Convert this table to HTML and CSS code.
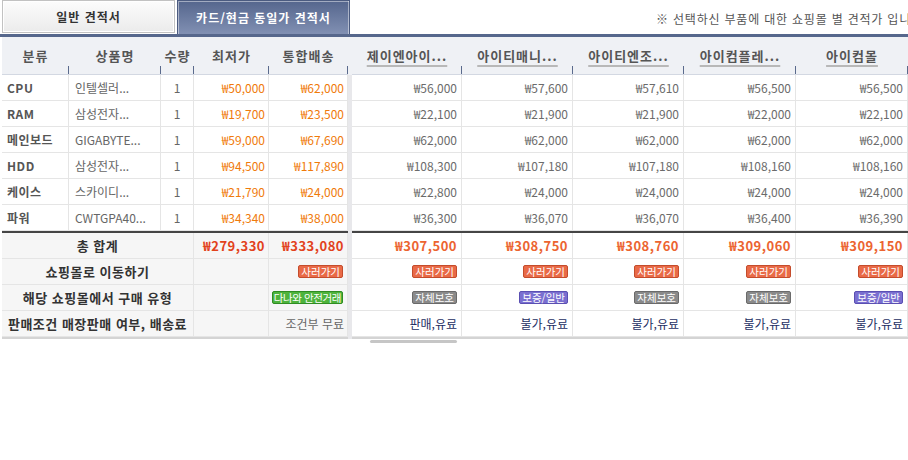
FILE: index.html
```html
<!DOCTYPE html>
<html lang="ko">
<head>
<meta charset="utf-8">
<title>견적서</title>
<link rel="stylesheet" href="styles.css">
</head>
<body>
<div class="top">
  <div class="tab tab-off">일반 견적서</div>
  <div class="tab tab-on">카드/현금 동일가 견적서</div>
  <div class="note">※ 선택하신 부품에 대한 쇼핑몰 별 견적가 입니다.</div>
</div>
<div class="bar"></div>
<div class="board">
  <div class="grid left">
    <div class="h">분류</div><div class="h">상품명</div><div class="h">수량</div><div class="h">최저가</div><div class="h">통합배송</div>

    <div class="c cat">CPU</div><div class="c name">인텔셀러...</div><div class="c m">1</div><div class="c r low">₩50,000</div><div class="c r low">₩62,000</div>
    <div class="c cat">RAM</div><div class="c name">삼성전자...</div><div class="c m">1</div><div class="c r low">₩19,700</div><div class="c r low">₩23,500</div>
    <div class="c cat">메인보드</div><div class="c name">GIGABYTE...</div><div class="c m">1</div><div class="c r low">₩59,000</div><div class="c r low">₩67,690</div>
    <div class="c cat">HDD</div><div class="c name">삼성전자...</div><div class="c m">1</div><div class="c r low">₩94,500</div><div class="c r low">₩117,890</div>
    <div class="c cat">케이스</div><div class="c name">스카이디...</div><div class="c m">1</div><div class="c r low">₩21,790</div><div class="c r low">₩24,000</div>
    <div class="c cat">파워</div><div class="c name">CWTGPA40...</div><div class="c m">1</div><div class="c r low">₩34,340</div><div class="c r low">₩38,000</div>

    <div class="thick"></div>

    <div class="f lab">총 합계</div><div class="f r tot">₩279,330</div><div class="f r tot">₩333,080</div>
    <div class="f lab">쇼핑몰로 이동하기</div><div class="f"></div><div class="f r"><span class="btn go">사러가기</span></div>
    <div class="f lab">해당 쇼핑몰에서 구매 유형</div><div class="f"></div><div class="f r"><span class="btn safe">다나와 안전거래</span></div>
    <div class="f lab">판매조건 매장판매 여부, 배송료</div><div class="f"></div><div class="f r cond">조건부 무료</div>

    <div class="end"></div>
  </div>
  <div class="divider"></div>
  <div class="rightwrap">
    <div class="grid right">
      <div class="h"><span class="shop">제이엔아이...</span></div><div class="h"><span class="shop">아이티매니...</span></div><div class="h"><span class="shop">아이티엔조...</span></div><div class="h"><span class="shop">아이컴플레...</span></div><div class="h"><span class="shop">아이컴몰</span></div>

      <div class="c r p">₩56,000</div><div class="c r p">₩57,600</div><div class="c r p">₩57,610</div><div class="c r p">₩56,500</div><div class="c r p">₩56,500</div>
      <div class="c r p">₩22,100</div><div class="c r p">₩21,900</div><div class="c r p">₩21,900</div><div class="c r p">₩22,000</div><div class="c r p">₩22,100</div>
      <div class="c r p">₩62,000</div><div class="c r p">₩62,000</div><div class="c r p">₩62,000</div><div class="c r p">₩62,000</div><div class="c r p">₩62,000</div>
      <div class="c r p">₩108,300</div><div class="c r p">₩107,180</div><div class="c r p">₩107,180</div><div class="c r p">₩108,160</div><div class="c r p">₩108,160</div>
      <div class="c r p">₩22,800</div><div class="c r p">₩24,000</div><div class="c r p">₩24,000</div><div class="c r p">₩24,000</div><div class="c r p">₩24,000</div>
      <div class="c r p">₩36,300</div><div class="c r p">₩36,070</div><div class="c r p">₩36,070</div><div class="c r p">₩36,400</div><div class="c r p">₩36,390</div>

      <div class="thick"></div>

      <div class="g r tot2">₩307,500</div><div class="g r tot2">₩308,750</div><div class="g r tot2">₩308,760</div><div class="g r tot2">₩309,060</div><div class="g r tot2">₩309,150</div>
      <div class="g r"><span class="btn go">사러가기</span></div><div class="g r"><span class="btn go">사러가기</span></div><div class="g r"><span class="btn go">사러가기</span></div><div class="g r"><span class="btn go">사러가기</span></div><div class="g r"><span class="btn go">사러가기</span></div>
      <div class="g r"><span class="btn self">자체보호</span></div><div class="g r"><span class="btn warr">보증/일반</span></div><div class="g r"><span class="btn self">자체보호</span></div><div class="g r"><span class="btn self">자체보호</span></div><div class="g r"><span class="btn warr">보증/일반</span></div>
      <div class="g r sale">판매,유료</div><div class="g r sale">불가,유료</div><div class="g r sale">불가,유료</div><div class="g r sale">불가,유료</div><div class="g r sale">불가,유료</div>

      <div class="end"></div>
    </div>
    <div class="scroll"></div>
  </div>
</div>
</body>
</html>
```
FILE: styles.css
```css
* { box-sizing: border-box; margin: 0; padding: 0; }

body {
  margin: 0;
  width: 908px;
  overflow: hidden;
  background: #fff;
  font-family: "Noto Sans CJK KR", "Noto Sans", sans-serif;
  font-size: 12px;
  color: #555;
}

.top {
  display: flex;
  align-items: flex-end;
  height: 34px;
  overflow: hidden;
  white-space: nowrap;
}

.tab {
  flex: none;
  width: 173px;
  display: flex;
  align-items: center;
  justify-content: center;
  font-weight: bold;
  font-size: 12px;
  letter-spacing: 1px;
}

.tab-off {
  height: 33px;
  margin-left: 2px;
  margin-bottom: 1px;
  border: 1px solid #c2c2c2;
  background: linear-gradient(#fcfcfc, #ebebeb);
  box-shadow: inset 0 0 0 1px #fff;
  color: #333;
}

.tab-on {
  height: 34px;
  margin-left: 2px;
  border: 1px solid #4b5b80;
  border-bottom: none;
  background: linear-gradient(#55668d, #8190b3);
  box-shadow: inset 1px 1px 0 rgba(255, 255, 255, 0.45), inset -1px 0 0 rgba(255, 255, 255, 0.45);
  color: #fff;
}

.note {
  flex: none;
  margin-left: 306px;
  align-self: center;
  padding-top: 2px;
  color: #555;
  font-size: 12px;
  letter-spacing: 0.8px;
}

.bar {
  height: 3px;
  background: #56678c;
}

.board {
  display: flex;
  align-items: flex-start;
}

.grid {
  display: grid;
  grid-template-rows: 38px repeat(6, 26px) 2px repeat(4, 26px) 2px;
}

.left {
  margin-left: 2px;
  width: 346px;
  grid-template-columns: 67px 92px 33px 75px 79px;
}

.right {
  width: 556px;
  grid-template-columns: 110px 111px 111px 112px 112px;
}

.h {
  display: flex;
  align-items: center;
  justify-content: center;
  background: linear-gradient(#5a6a8c, #5a6a8c) right bottom / 1px 8px no-repeat, #eff1f5;
  border-bottom: 1px solid #d3d8e2;
  font-size: 13px;
  font-weight: bold;
  letter-spacing: 1px;
  color: #555;
}

.shop {
  text-decoration: underline;
  text-decoration-color: #b8b8b8;
  text-decoration-thickness: 2px;
  text-underline-offset: 4px;
}

.c, .f, .g {
  display: flex;
  align-items: center;
  padding: 0 4px;
  white-space: nowrap;
  overflow: hidden;
  border-right: 1px solid #e5e5e5;
  border-bottom: 1px solid #e5e5e5;
}

.r { justify-content: flex-end; }
.m { justify-content: center; }

.cat {
  padding-left: 5px;
  font-weight: bold;
  font-size: 12px;
  letter-spacing: 0.5px;
  color: #555;
}

.name {
  padding-left: 6px;
  color: #666;
}

.m { color: #666; }

.low {
  color: #f07a0a;
  padding-right: 3px;
}

.p {
  color: #6b6b6b;
}

.thick {
  grid-column: 1 / -1;
  background: #454545;
}

.end {
  grid-column: 1 / -1;
  background: #d4d4d4;
}

.f {
  background: #f6f6f6;
}

.lab {
  grid-column: span 3;
  justify-content: center;
  padding: 0;
  font-weight: bold;
  font-size: 13px;
  letter-spacing: 0.5px;
  color: #333;
}

.tot {
  font-weight: bold;
  font-size: 13px;
  letter-spacing: 0.5px;
  color: #e2421c;
  padding-right: 3px;
}

.tot2 {
  font-weight: bold;
  font-size: 13px;
  letter-spacing: 0.5px;
  color: #ec6430;
}

.cond {
  color: #666;
  padding-right: 3px;
}

.sale {
  color: #1c2e62;
}

.btn {
  display: inline-block;
  font-size: 10.5px;
  line-height: 11px;
  padding: 0 2px;
  border: 1px solid;
  border-radius: 2px;
  color: #fff;
  white-space: nowrap;
}

.go { background: #e96a47; border-color: #c44c2c; }
.safe { background: #4db33c; border-color: #2f8c22; padding: 0 1px; letter-spacing: -0.4px; }
.self { background: #8a8a8a; border-color: #6a6a6a; }
.warr { background: #7a6fd0; border-color: #5a4fb2; }

.divider {
  width: 4px;
  height: 302px;
  background: linear-gradient(#eff1f5 0 38px, #e8e8eb 38px);
}

.rightwrap {
  display: flex;
  flex-direction: column;
}

.scroll {
  margin: 1px 0 0 18px;
  width: 87px;
  height: 3px;
  border-radius: 2px;
  background: #c6c6c6;
}
```
